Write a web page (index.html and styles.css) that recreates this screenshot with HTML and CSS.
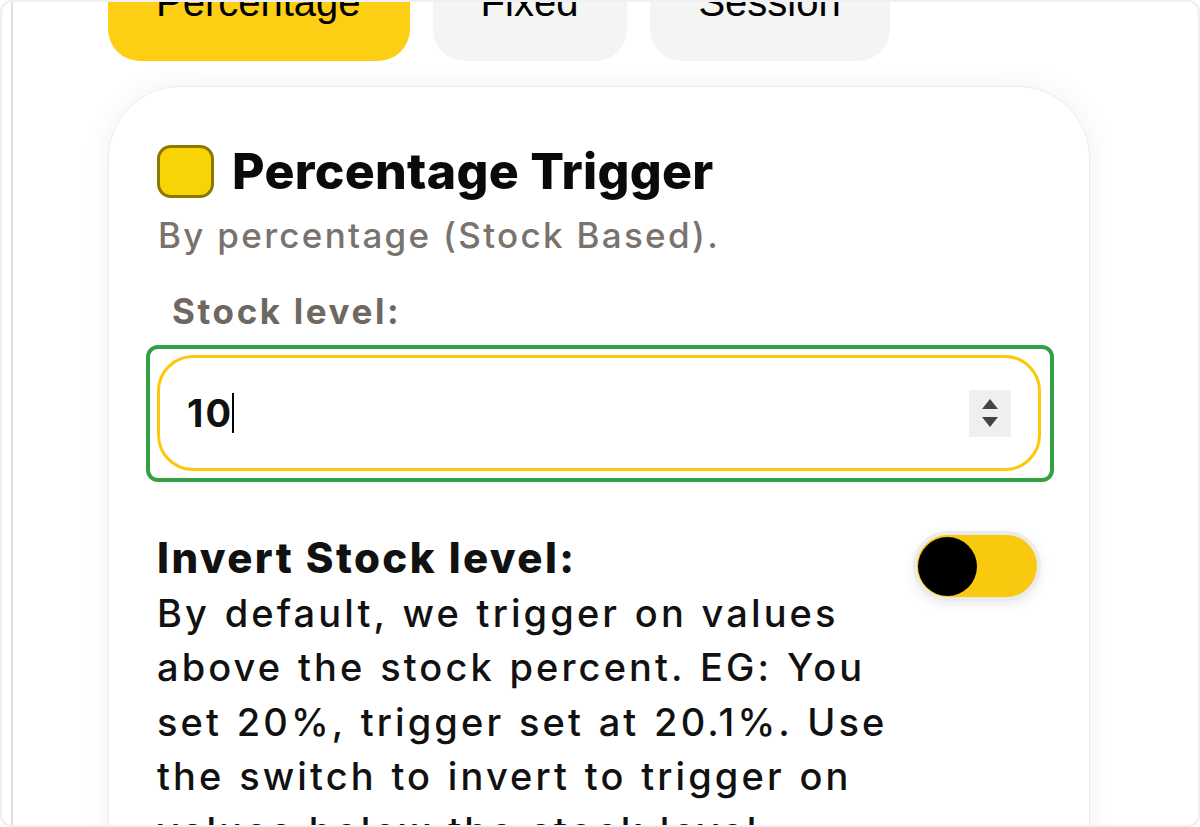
FILE: index.html
```html
<!DOCTYPE html>
<html lang="en">
<head>
    <meta charset="UTF-8">
    <meta name="viewport" content="width=device-width, initial-scale=1.0">
    <title>Percentage Trigger</title>
    <link rel="stylesheet" href="styles.css">
</head>
<body>

    <div class="frame">
        <div class="page">
            <div class="tabs">
                <button class="tab active">Percentage</button>
                <button class="tab">Fixed</button>
                <button class="tab">Session</button>
            </div>

            <div class="card">
                <div class="card-title">
                    <span class="square-icon"></span>
                    <h2>Percentage Trigger</h2>
                </div>
                <p class="subtitle">By percentage (Stock Based).</p>

                <label class="field-label" for="stockLevel">Stock level:</label>
                <div class="highlight">
                    <div class="number-input" id="stockLevel">
                        <span class="value">10<span class="caret"></span></span>
                        <span class="spinner">
                            <span class="arrow up"></span>
                            <span class="arrow down"></span>
                        </span>
                    </div>
                </div>

                <div class="invert-row">
                    <div class="invert-text">
                        <strong>Invert Stock level:</strong>
                        <p>By default, we trigger on values above the stock percent. EG: You set 20%, trigger set at 20.1%. Use the switch to invert to trigger on values below the stock level.</p>
                    </div>
                    <div class="toggle">
                        <span class="knob"></span>
                    </div>
                </div>
            </div>
        </div>
    </div>

</body>
</html>
```

FILE: styles.css
```css
body {
    margin: 0;
    padding: 0;
    background-color: #ffffff;
    font-family: Inter, "Noto Sans", sans-serif;
    color: #111111;
}
.frame {
    height: 827px;
    box-sizing: border-box;
    border: 2px solid #efeff4;
    border-radius: 12px;
    overflow: hidden;
    padding-left: 9px;
}
.page {
    display: flow-root;
    height: 100%;
    border-left: 2px solid #e4e0dd;
    padding-left: 95px;
}
.tabs {
    display: flex;
    gap: 23px;
    margin-top: -59px;
}
.tab {
    font-family: "Liberation Sans", Arial, sans-serif;
    font-size: 40px;
    line-height: 46px;
    padding: 36px 49px 36px 48px;
    border: none;
    border-radius: 32px;
    background-color: #f4f4f3;
    color: #000000;
}
.tab.active {
    background-color: #fccf14;
}
.card {
    width: 982px;
    box-sizing: border-box;
    margin-top: 25px;
    padding: 56px 48px 200px 48px;
    border: 1px solid #ebebeb;
    border-radius: 72px;
    box-shadow: 0 0 30px rgba(0, 0, 0, 0.06);
}
.card-title {
    display: flex;
    align-items: center;
    gap: 18px;
}
.square-icon {
    width: 51px;
    height: 47px;
    border: 3px solid #8a7800;
    border-radius: 14px;
    background-color: #f8d406;
    flex-shrink: 0;
}
.card-title h2 {
    margin: 0;
    font-size: 50px;
    line-height: 56px;
    font-weight: 800;
    letter-spacing: 0.3px;
    color: #0a0a0a;
}
.subtitle {
    margin: 14px 0 0 1px;
    font-size: 35px;
    line-height: 44px;
    font-weight: 500;
    color: #7a736d;
    letter-spacing: 2.3px;
}
.field-label {
    display: block;
    margin: 32px 0 0 15px;
    font-size: 35px;
    line-height: 44px;
    font-weight: 700;
    color: #6e6762;
    letter-spacing: 2.6px;
}
.highlight {
    margin: 12px -13px 0 -11px;
    padding: 6px 9px 7px 7px;
    border: 4px solid #33a046;
    border-radius: 12px;
}
.number-input {
    height: 116px;
    box-sizing: border-box;
    border: 3px solid #fdc70c;
    border-radius: 36px;
    padding: 0 27px;
    display: flex;
    align-items: center;
    justify-content: space-between;
}
.value {
    font-size: 38px;
    font-weight: 700;
    display: flex;
    align-items: center;
    letter-spacing: 2px;
}
.caret {
    width: 2px;
    height: 40px;
    background-color: #000000;
    margin-left: -1px;
}
.spinner {
    width: 42px;
    height: 47px;
    background-color: #efefef;
    display: flex;
    flex-direction: column;
    align-items: center;
    justify-content: center;
    gap: 8px;
}
.arrow {
    width: 0;
    height: 0;
    border-left: 8px solid transparent;
    border-right: 8px solid transparent;
}
.arrow.up {
    border-bottom: 10px solid #444444;
}
.arrow.down {
    border-top: 10px solid #444444;
}
.invert-row {
    display: flex;
    justify-content: space-between;
    margin-top: 49px;
}
.invert-text {
    width: 734px;
    font-size: 38px;
    line-height: 54.5px;
    font-weight: 500;
    letter-spacing: 3.1px;
    word-spacing: 1.5px;
}
.invert-text strong {
    display: block;
    font-size: 42px;
    font-weight: 800;
    letter-spacing: 2.4px;
    word-spacing: 0;
}
.invert-text p {
    margin: 0;
}
.toggle {
    width: 128px;
    height: 70px;
    box-sizing: border-box;
    flex-shrink: 0;
    margin-top: 0;
    border: 4px solid #ebebeb;
    border-radius: 35px;
    background-color: #f9c910;
    display: flex;
    align-items: center;
    padding-left: 1px;
    box-shadow: 0 4px 12px rgba(0, 0, 0, 0.08);
}
.knob {
    width: 59px;
    height: 59px;
    border-radius: 50%;
    background-color: #000000;
}
```
